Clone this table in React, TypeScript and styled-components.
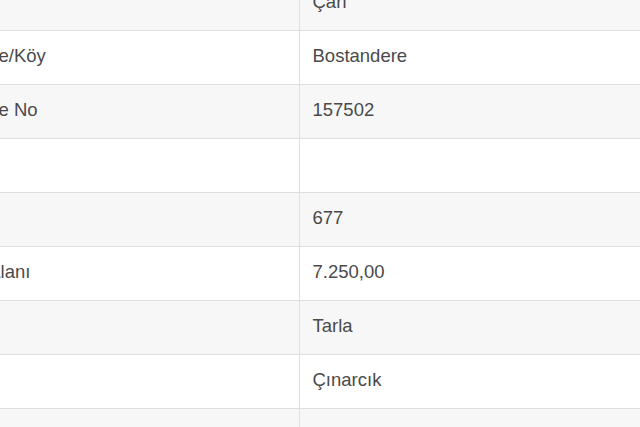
import React from 'react';
import styled, {createGlobalStyle} from "styled-components";

const GlobalStyle = createGlobalStyle`
    html, body {
        margin: 0;
        padding: 0;
        background-color: #ffffff;
        overflow: hidden;
    }
`;

const Page = styled.div`
    width: 640px;
    height: 427px;
    overflow: hidden;
`;

const InfoTable = styled.table`
    border-collapse: collapse;
    table-layout: fixed;
    margin: -24px 0 0 -69px;
    width: 880px;
    font-family: "Liberation Sans", Arial, sans-serif;
    font-size: 18.5px;
    color: #4a4a4a;
`;

const Row = styled.tr<{ $striped: boolean }>`
    background-color: ${(props) => (props.$striped ? "#f7f7f7" : "#ffffff")};
    border-bottom: 1px solid #dfdfdf;
`;

const LabelCell = styled.td`
    width: 368px;
    height: 54px;
    padding: 0 13px 2px;
    box-sizing: border-box;
    vertical-align: middle;
    border-right: 1px solid #dfdfdf;
    white-space: nowrap;
`;

const ValueCell = styled.td`
    height: 54px;
    padding: 0 13px 2px;
    box-sizing: border-box;
    vertical-align: middle;
    white-space: nowrap;
`;

const rows = [
    {label: "İlçe", value: "Çan"},
    {label: "Mahalle/Köy", value: "Bostandere"},
    {label: "Mahalle No", value: "157502"},
    {label: "Ada", value: ""},
    {label: "Parsel", value: "677"},
    {label: "Tapu Alanı", value: "7.250,00"},
    {label: "Nitelik", value: "Tarla"},
    {label: "Mevkii", value: "Çınarcık"},
    {label: "Zemin Tipi", value: "Ana Taşınmaz"},
];

const App = () => {
    return (
        <Page>
            <GlobalStyle/>
            <InfoTable>
                <tbody>
                {rows.map((row, i) => (
                    <Row key={row.label} $striped={i % 2 === 0}>
                        <LabelCell>{row.label}</LabelCell>
                        <ValueCell>{row.value}</ValueCell>
                    </Row>
                ))}
                </tbody>
            </InfoTable>
        </Page>
    );
};

export default App;
